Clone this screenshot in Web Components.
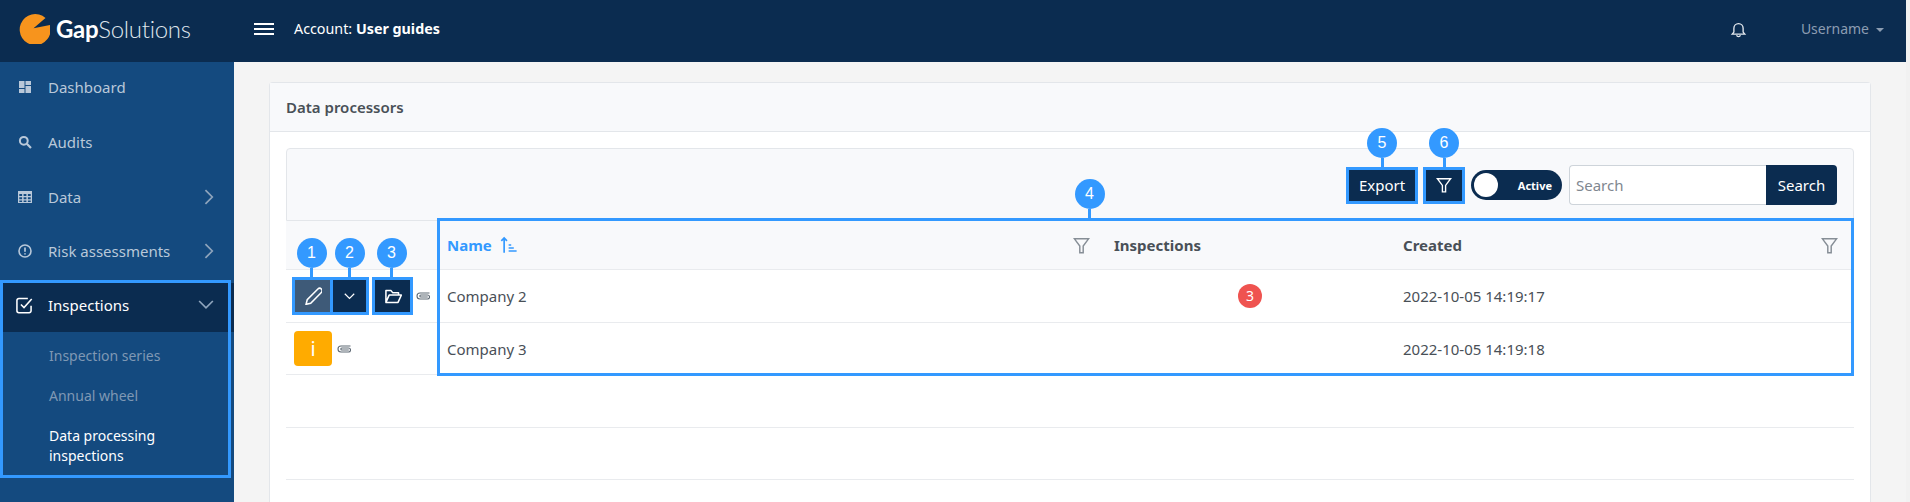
<!DOCTYPE html>
<html>
<head>
<meta charset="utf-8">
<title>Data processors</title>
<style>
  html, body { margin: 0; height: 100%; background: #f1f1f1; overflow: hidden; }
  body { font: 15px "Noto Sans", sans-serif; color: #495057; }
</style>
</head>
<body>
<app-shell>
  <top-bar slot="top"></top-bar>
  <side-nav slot="side"></side-nav>
  <data-card></data-card>
</app-shell>

<script>
const BLUE = '#3399ff';

const ICONS = {
  dashboard: '<path fill="currentColor" d="M1 1h5.500v7H1zM7.500 1H13v4H7.500zM7.500 6H13v7H7.500zM1 9h5.500v4H1z"/>',
  search: '<circle cx="5.800" cy="5.800" r="3.900" fill="none" stroke="currentColor" stroke-width="2"/><path d="M8.800 8.800 13 13" stroke="currentColor" stroke-width="2.200"/>',
  table: '<path fill="currentColor" fill-rule="evenodd" d="M0 1h14v12H0zM1.300 4v2h2.800V4zM5.600 4v2h2.800V4zM9.900 4v2h2.800V4zM1.300 7.200v2h2.800v-2zM5.600 7.200v2h2.800v-2zM9.900 7.200v2h2.800v-2zM1.300 10.400v1.600h2.800v-1.600zM5.600 10.400v1.600h2.800v-1.600zM9.900 10.400v1.600h2.800v-1.600z"/>',
  alert: '<circle cx="7" cy="7" r="6" fill="none" stroke="currentColor" stroke-width="1.600"/><path d="M7 3.500v4.200M7 9.200v1.400" stroke="currentColor" stroke-width="1.700"/>',
  check: '<path d="M12.500 7.500v4a1.500 1.500 0 0 1-1.500 1.500H3a1.500 1.500 0 0 1-1.500-1.500v-8A1.500 1.500 0 0 1 3 2h7" fill="none" stroke="currentColor" stroke-width="1.200"/><path d="M4.600 6.600 7 9l6-6.600" fill="none" stroke="currentColor" stroke-width="1.200"/>',
  right: '<path d="M3 1l6 6-6 6" fill="none" stroke="currentColor" stroke-width="1.500"/>',
  down: '<path d="M1 3.500l6 6 6-6" fill="none" stroke="currentColor" stroke-width="1.500"/>',
  pencil: '<path d="M10.800 1.600a1.900 1.900 0 0 1 2.700 2.700L5.200 12.600l-3.600.9.900-3.600z" fill="none" stroke="currentColor" stroke-width="1.200"/>',
  folder: '<path d="M1.500 12V2.800h4l1.200 1.600h4.600V6.300M1.500 12h9.400l2.600-5.700H4z" fill="none" stroke="currentColor" stroke-width="1.200" stroke-linejoin="round"/>',
  clip: '<path d="M13.500 4H4a3 3 0 0 0 0 6h7.500a2 2 0 0 0 0-4H4.800a1 1 0 0 0 0 2h7" fill="none" stroke="currentColor" stroke-width="1.100"/>',
  funnel: '<path d="M1.200 1.500h11.600L8.400 7.400v5.600H5.600V7.400z" fill="none" stroke="currentColor" stroke-width="1.200"/>',
  bell: '<path d="M1.800 10.800h10.400l-1.400-1.700V6a3.800 3.800 0 0 0-7.600 0v3.100zM5.400 11.800a1.700 1.700 0 0 0 3.200 0" fill="none" stroke="currentColor" stroke-width="1.100"/>',
  sort: '<path d="M4 13V1.500M1.800 3.800 4 1.500l2.200 2.300" fill="none" stroke="currentColor" stroke-width="1.300"/><path d="M7.500 7h2M7.500 9.300h4M7.500 11.600h6.200" stroke="currentColor" stroke-width="1.200"/>'
};

class UiIcon extends HTMLElement {
  connectedCallback() {
    const size = this.getAttribute('size') || 14;
    this.attachShadow({ mode: 'open' }).innerHTML = `
      <style>:host { display: inline-flex; flex: none; } svg { display: block; }</style>
      <svg width="${size}" height="${size}" viewBox="0 0 14 14">${ICONS[this.getAttribute('name')]}</svg>`;
  }
}
customElements.define('ui-icon', UiIcon);

// blue outline from the guide, with an optional numbered bubble on a stem
class GuideFrame extends HTMLElement {
  connectedCallback() {
    const n = this.getAttribute('n');
    this.attachShadow({ mode: 'open' }).innerHTML = `
      <style>
        :host { display: block; position: relative; outline: 3px solid ${BLUE}; }
        .stem { position: absolute; z-index: 5; left: calc(50% + var(--shift, 0px) - 1.5px); bottom: 100%; width: 3px; height: 12px; background: ${BLUE}; }
        .bubble { position: absolute; z-index: 5; left: calc(50% + var(--shift, 0px) - 15px); bottom: calc(100% + 12px); width: 30px; height: 30px; border-radius: 50%; background: ${BLUE}; color: #fff; font: 16px/30px "Liberation Sans", sans-serif; text-align: center; }
      </style>
      <slot></slot>
      ${n ? `<span class="stem"></span><span class="bubble">${n}</span>` : ''}`;
  }
}
customElements.define('guide-frame', GuideFrame);

class AppShell extends HTMLElement {
  connectedCallback() {
    this.attachShadow({ mode: 'open' }).innerHTML = `
      <style>
        :host { display: block; width: 1906px; height: 502px; overflow: hidden; }
        .body { display: grid; grid-template-columns: 234px 1fr; height: 440px; }
        main { background: #f4f4f4; padding: 20px 35px 0; min-width: 0; }
      </style>
      <slot name="top"></slot>
      <div class="body">
        <slot name="side"></slot>
        <main><slot></slot></main>
      </div>`;
  }
}
customElements.define('app-shell', AppShell);

class TopBar extends HTMLElement {
  connectedCallback() {
    this.attachShadow({ mode: 'open' }).innerHTML = `
      <style>
        :host { display: flex; align-items: center; height: 62px; padding-bottom: 5px; box-sizing: border-box; background: #0b2c50; color: #fff; font-size: 14.3px; }
        .logo { display: flex; align-items: center; width: 254px; padding-left: 19px; box-sizing: border-box; }
        .word { margin-left: 6px; font: 300 24px/1 Lato, sans-serif; color: #dfe5ec; letter-spacing: -.3px; }
        .word b { font-weight: 700; color: #fff; }
        .burger { width: 20px; height: 12px; border-top: 2px solid #fff; border-bottom: 2px solid #fff; position: relative; box-sizing: border-box; }
        .burger::after { content: ""; position: absolute; left: 0; right: 0; top: 3px; height: 2px; background: #fff; }
        .account { margin-left: 20px; }
        .right { margin-left: auto; display: flex; align-items: center; color: #8c9db2; font-size: 14px; }
        ui-icon { color: #e6eaef; margin: 2px 54px 0 0; }
        .caret { margin: 2px 22px 0 7px; border: 4px solid transparent; border-top-color: #8c9db2; border-bottom: 0; }
      </style>
      <div class="logo">
        <svg width="31" height="31" viewBox="0 0 31 31"><path fill="#f7941d" d="M14.500 15.300 31 12a15.500 15.500 0 1 1-4.500-7z"/></svg>
        <span class="word"><b>Gap</b>Solutions</span>
      </div>
      <div class="burger"></div>
      <div class="account">Account: <b>User guides</b></div>
      <div class="right"><ui-icon name="bell" size="17"></ui-icon>Username<span class="caret"></span></div>`;
  }
}
customElements.define('top-bar', TopBar);

class NavItem extends HTMLElement {
  connectedCallback() {
    const arrow = this.getAttribute('arrow');
    this.attachShadow({ mode: 'open' }).innerHTML = `
      <style>
        :host { display: flex; align-items: center; height: 50px; padding: 0 16px 0 18px; box-sizing: border-box; color: #b9c8d9; font-size: 15px; }
        :host([open]) { height: 49px; background: #0b2c50; color: #fff; padding: 0 20px 4px 18px; }
        .icon { width: 30px; display: flex; }
        :host([open]) .icon { margin-left: -3px; width: 33px; }
        .label { flex: 1; }
        .arrow { color: #8ea4bc; }
      </style>
      <span class="icon"><ui-icon name="${this.getAttribute('icon')}" size="${this.getAttribute('size') || 14}"></ui-icon></span>
      <span class="label"><slot></slot></span>
      ${arrow ? `<ui-icon class="arrow" name="${arrow}" size="16"></ui-icon>` : ''}`;
  }
}
customElements.define('nav-item', NavItem);

class SideNav extends HTMLElement {
  connectedCallback() {
    this.attachShadow({ mode: 'open' }).innerHTML = `
      <style>
        :host { display: flex; flex-direction: column; gap: 4.8px; background: #144a7f; }
        guide-frame { margin: 1.8px 6px 0 3px; width: 225px; }
        nav-item[open] { margin: 0 -6px 0 -3px; }
        .subs { display: flex; flex-direction: column; gap: 20px; padding: 14px 20px 9px 46px; font-size: 14px; line-height: 20px; color: #7f98b4; }
        .subs .on { color: #fff; }
      </style>
      <nav-item icon="dashboard">Dashboard</nav-item>
      <nav-item icon="search">Audits</nav-item>
      <nav-item icon="table" arrow="right">Data</nav-item>
      <nav-item icon="alert" arrow="right">Risk assessments</nav-item>
      <guide-frame>
        <nav-item icon="check" arrow="down" size="18" open>Inspections</nav-item>
        <div class="subs">
          <div>Inspection series</div>
          <div>Annual wheel</div>
          <div class="on">Data processing inspections</div>
        </div>
      </guide-frame>`;
  }
}
customElements.define('side-nav', SideNav);

class DataCard extends HTMLElement {
  connectedCallback() {
    this.attachShadow({ mode: 'open' }).innerHTML = `
      <style>
        :host { display: block; background: #fff; border: 1px solid #e3e6ea; border-bottom: 0; border-radius: 4px 4px 0 0; height: 420px; box-sizing: border-box; }
        header { height: 48px; line-height: 48px; padding: 0 16px; background: #f8f9fb; border-bottom: 1px solid #e3e6ea; font-weight: 600; }
        .inner { padding: 16px 16px 0; }
        .tools { display: flex; align-items: center; justify-content: flex-end; height: 73px; box-sizing: border-box; padding: 1px 16px 0 0; background: #f8f9fb; border: 1px solid #e3e6ea; border-radius: 4px 4px 0 0; }
        .btn { display: block; height: 31px; line-height: 30px; width: 66px; text-align: center; background: #0b2c50; color: #fff; }
        .filter { display: flex; width: 36px; align-items: center; justify-content: center; }
        .gap { margin-left: 11px; }
        .switch { display: flex; align-items: center; justify-content: flex-end; width: 91px; height: 30px; margin: 0 7px 0 9px; padding-right: 10px; box-sizing: border-box; border-radius: 15px; background: #0b2c50; color: #fff; font-size: 11px; font-weight: 700; position: relative; }
        .switch::before { content: ""; position: absolute; left: 3px; top: 3px; width: 24px; height: 24px; border-radius: 50%; background: #fff; }
        .search { display: flex; height: 40px; }
        .search input { width: 197px; box-sizing: border-box; font: inherit; color: inherit; border: 1px solid #ced4da; border-right: 0; border-radius: 4px 0 0 4px; padding: 0 6px; outline: 0; }
        .search input::placeholder { color: #7f8790; opacity: 1; }
        .search span { width: 71px; text-align: center; background: #0b2c50; color: #fff; line-height: 40px; border-radius: 0 4px 4px 0; }
      </style>
      <header>Data processors</header>
      <div class="inner">
        <div class="tools">
          <guide-frame n="5"><span class="btn">Export</span></guide-frame>
          <guide-frame n="6" class="gap"><span class="btn filter"><ui-icon name="funnel" size="16"></ui-icon></span></guide-frame>
          <div class="switch">Active</div>
          <div class="search"><input placeholder="Search"><span>Search</span></div>
        </div>
        <processor-table></processor-table>
      </div>`;
  }
}
customElements.define('data-card', DataCard);

class ProcessorTable extends HTMLElement {
  connectedCallback() {
    this.attachShadow({ mode: 'open' }).innerHTML = `
      <style>
        :host { display: block; }
        .grid { display: grid; grid-template-columns: 154px 1fr; }
        .left > div, .row { box-sizing: border-box; border-bottom: 1px solid #e9ebee; }
        .left .head, .row.head { height: 49px; background: #f8f9fb; }
        .left .r1, .row.r1 { height: 53px; }
        .left .r2, .row.r2 { height: 52px; }
        .left > div { display: flex; align-items: center; padding-left: 8px; }
        .data { height: 152px; margin-right: 3px; align-self: start; --shift: -56px; }
        .row { display: grid; grid-template-columns: 667px 289px 1fr; align-items: center; }
        .cell { padding-left: 7px; display: flex; align-items: center; }
        .th { font-weight: 700; justify-content: space-between; padding-right: 13px; }
        .name { justify-content: space-between; padding-right: 17px; }
        .name > span { display: flex; align-items: center; gap: 7px; color: ${BLUE}; font-weight: 700; }
        .gray { color: #868e96; }
        .mid { padding: 0 3px 0 0; }
        .badge { margin: auto; width: 24px; height: 24px; border-radius: 50%; background: #ef5350; color: #fff; text-align: center; line-height: 24px; font-size: 14px; }
        .empty { height: 53px; border-bottom: 1px solid #e9ebee; box-sizing: border-box; }
        .empty:last-child { height: 52px; }
        .rowbtns { display: flex; margin-left: 1px; }
        .b { display: flex; align-items: center; justify-content: center; height: 32px; color: #fff; background: #0b2c50; }
        .clip { color: #5f6a75; margin-left: 6px; }
        .info { width: 38px; height: 35px; border-radius: 4px; background: #ffab00; color: #fff; font-size: 20px; display: flex; align-items: center; justify-content: center; }
      </style>
      <div class="grid">
        <div class="left">
          <div class="head"></div>
          <div class="r1">
            <div class="rowbtns">
              <guide-frame n="1" style="--shift:-1px"><span class="b" style="width:35px;background:#3e5a78"><ui-icon name="pencil" size="18"></ui-icon></span></guide-frame>
              <guide-frame n="2" style="margin-left:3px"><span class="b" style="width:33px"><ui-icon name="down" size="11"></ui-icon></span></guide-frame>
              <guide-frame n="3" style="margin-left:9px;--shift:-1px"><span class="b" style="width:35px"><ui-icon name="folder" size="18"></ui-icon></span></guide-frame>
            </div>
            <ui-icon class="clip" name="clip" size="14"></ui-icon>
          </div>
          <div class="r2"><span class="info">i</span><ui-icon class="clip" style="margin-left:5px" name="clip" size="14"></ui-icon></div>
        </div>
        <guide-frame class="data" n="4">
          <div class="row head">
            <div class="cell name"><span>Name <ui-icon name="sort" size="18"></ui-icon></span><ui-icon class="gray" name="funnel" size="17"></ui-icon></div>
            <div class="cell"><b>Inspections</b></div>
            <div class="cell th"><span>Created</span><ui-icon class="gray" name="funnel" size="17"></ui-icon></div>
          </div>
          <div class="row r1">
            <div class="cell">Company 2</div>
            <div class="cell mid"><span class="badge">3</span></div>
            <div class="cell">2022-10-05 14:19:17</div>
          </div>
          <div class="row r2">
            <div class="cell">Company 3</div>
            <div class="cell"></div>
            <div class="cell">2022-10-05 14:19:18</div>
          </div>
        </guide-frame>
      </div>
      <div class="empty"></div>
      <div class="empty"></div>`;
  }
}
customElements.define('processor-table', ProcessorTable);
</script>
</body>
</html>
